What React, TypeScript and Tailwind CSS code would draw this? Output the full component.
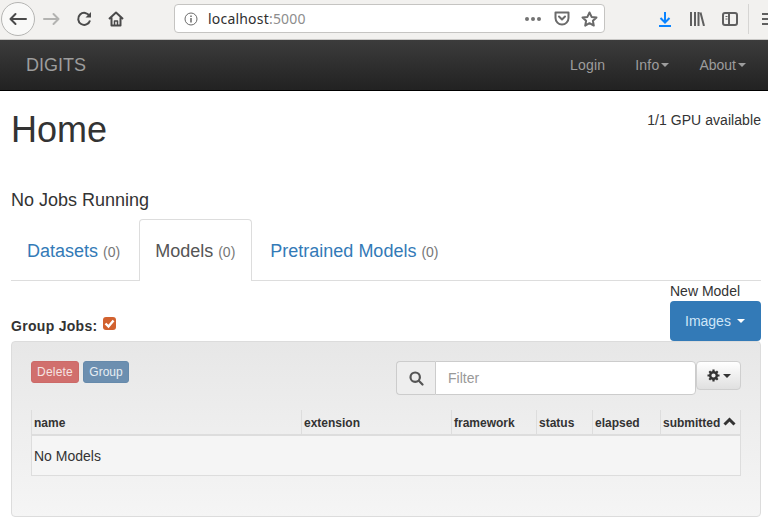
import React from 'react';

const sans = "font-['Liberation_Sans',Arial,sans-serif]";

const Caret = ({ className = '' }: { className?: string }) => (
  <span className={`inline-block w-0 h-0 border-x-4 border-x-transparent border-t-4 ${className}`} />
);

const BrowserBar: React.FC = () => (
  <div className="h-10 bg-[#f2f1ef] border-b border-[#c8c7c5] flex items-center font-['Noto_Sans',sans-serif] relative overflow-hidden">
    <div className="ml-[1px] mt-[-1px] w-[34px] h-[34px] rounded-full border border-[#b5b5b3] bg-[#f9f9f8] flex items-center justify-center shrink-0">
      <svg width="18" height="18" viewBox="0 0 18 18" fill="none" stroke="#4a4a4a" strokeWidth="2" strokeLinecap="round" strokeLinejoin="round">
        <path d="M17 9H1.500M6.500 4L1.500 9l5 5" />
      </svg>
    </div>
    <svg className="ml-[8px] mt-[-2px] shrink-0" width="17" height="16" viewBox="0 0 17 16" fill="none" stroke="#b3b3b1" strokeWidth="2" strokeLinecap="round" strokeLinejoin="round">
      <path d="M1 8h14.500M10.500 3l5 5-5 5" />
    </svg>
    <svg className="ml-[16px] mt-[-2px] shrink-0" width="16" height="16" viewBox="0 0 16 16" fill="none" stroke="#4a4a4a" strokeWidth="2">
      <path d="M13.500 5A6 6 0 1 0 14 9.500" />
      <path d="M15 1v5.500H9.500z" fill="#4a4a4a" stroke="none" />
    </svg>
    <svg className="ml-[16px] mt-[-1px] shrink-0" width="16" height="16" viewBox="0 0 16 16" fill="none" stroke="#4a4a4a" strokeWidth="2" strokeLinejoin="round">
      <path d="M1 8l7-6.500L15 8M3.500 6.500V14.500h9V6.500" />
      <path d="M6.500 14.500V10h3v4.500" strokeWidth="1.500" />
    </svg>
    <div className="ml-[50px] mt-[-2px] w-[431px] h-[29px] bg-white border border-[#c5c4c2] rounded-[4px] flex items-center shrink-0">
      <svg className="ml-[9px] shrink-0" width="14" height="14" viewBox="0 0 14 14" fill="none" stroke="#6a6a6a" strokeWidth="1">
        <circle cx="7" cy="7" r="6" />
        <path d="M7 6v4.500M7 3.500v1.500" strokeWidth="1.500" />
      </svg>
      <span className="ml-[10px] text-[14px] tracking-[0.2px] text-[#2f2f2f]">
        localhost<span className="text-[#8d8d8d]">:5000</span>
      </span>
      <div className="ml-auto flex items-center">
        <span className="flex gap-[2px]">
          <span className="w-[4px] h-[4px] rounded-full bg-[#737373]" />
          <span className="w-[4px] h-[4px] rounded-full bg-[#737373]" />
          <span className="w-[4px] h-[4px] rounded-full bg-[#737373]" />
        </span>
        <svg className="ml-[13px]" width="16" height="15" viewBox="0 0 16 15" fill="none" stroke="#6a6a6a" strokeWidth="2" strokeLinecap="round" strokeLinejoin="round">
          <path d="M1.500 1.500h13V7a6.500 6.500 0 0 1-13 0z" />
          <path d="M5 5.500l3 3 3-3" />
        </svg>
        <svg className="ml-[11px] mr-[6px]" width="17" height="16" viewBox="0 0 17 16" fill="none" stroke="#6a6a6a" strokeWidth="2" strokeLinejoin="round">
          <path d="M8.500 1.500l2.100 4.400 4.900.6-3.600 3.300.9 4.800-4.300-2.400-4.300 2.400.9-4.800L1.500 6.500l4.900-.6z" />
        </svg>
      </div>
    </div>
    <svg className="ml-[53px] mt-[-2px] shrink-0" width="14" height="16" viewBox="0 0 14 16" fill="none" stroke="#0a84ff" strokeWidth="2">
      <path d="M7 1v10M2.500 7L7 11.500 11.500 7M1 15h12" />
    </svg>
    <svg className="ml-[18px] mt-[-2px] shrink-0" width="15" height="14" viewBox="0 0 15 14" fill="none" stroke="#5f5f5f" strokeWidth="2">
      <path d="M1 0v14M5 0v14M8.500 0v14M10.500 0.500l3.500 13.500" />
    </svg>
    <svg className="ml-[17px] mt-[-2px] shrink-0" width="16" height="14" viewBox="0 0 16 14" fill="none" stroke="#5f5f5f" strokeWidth="2">
      <rect x="1" y="1" width="14" height="12" rx="2" />
      <path d="M7 1v12" />
      <path d="M3.500 4.500h2M3.500 7h2" strokeWidth="1" />
    </svg>
    <span className="ml-[10px] mt-[-2px] w-px h-[30px] bg-[#d6d5d3] shrink-0" />
    <span className="ml-[13px] mt-[-2px] w-[8px] flex flex-col gap-[3px] shrink-0">
      <span className="h-[2px] bg-[#5f5f5f]" />
      <span className="h-[2px] bg-[#5f5f5f]" />
      <span className="h-[2px] bg-[#5f5f5f]" />
    </span>
  </div>
);

const NavBar: React.FC = () => (
  <nav className="h-[51px] bg-gradient-to-b from-[#3c3c3c] to-[#222222] border-b border-black flex items-center pl-[26px] text-[#9d9d9d]">
    <span className="text-[18px]">DIGITS</span>
    <div className="ml-auto flex items-center text-[14px] pr-[22px]">
      <span className="tracking-[0.2px]">Login</span>
      <span className="ml-[30px] flex items-center tracking-[0.2px]">
        Info
        <Caret className="ml-[2px] border-t-[#9d9d9d]" />
      </span>
      <span className="ml-[30px] flex items-center">
        About
        <Caret className="ml-[2px] border-t-[#9d9d9d]" />
      </span>
    </div>
  </nav>
);

const Tab = ({ label, active, className = '' }: { label: string; active?: boolean; className?: string }) => (
  <div
    className={`h-[62px] flex items-center text-[18px] pt-[2px] ${
      active
        ? 'bg-white border border-b-0 border-[#dddddd] rounded-t-[4px] text-[#555555] mb-[-1px]'
        : 'text-[#337ab7]'
    } ${className}`}
  >
    {label}
    <span className="ml-[5px] text-[14px] text-[#777777] mt-[2px]">(0)</span>
  </div>
);

const columns = ['name', 'extension', 'framework', 'status', 'elapsed', 'submitted'];

const ModelsPanel: React.FC = () => (
  <div className="h-[176px] rounded-[4px] border border-[#dcdcdc] bg-gradient-to-b from-[#e7e7e7] to-[#f5f5f5] px-[19px] pt-[19px]">
    <div className="flex items-start justify-between h-[49px]">
      <div className="flex gap-[4px]">
        <span className="w-[48px] h-[22px] text-center rounded-[3px] bg-[#d16f6d] border border-[#cc6a68] text-[#f6e4e3] text-[12px] tracking-[0.2px] leading-[20px]">Delete</span>
        <span className="w-[46px] h-[22px] text-center rounded-[3px] bg-[#6c8fb0] border border-[#668aab] text-[#e6edf3] text-[12px] leading-[20px]">Group</span>
      </div>
      <div className="flex">
        <div className="w-[39px] h-[34px] flex items-center justify-center bg-[#eeeeee] border border-r-0 border-[#cccccc] rounded-l-[4px]">
          <svg width="15" height="15" viewBox="0 0 15 15" fill="none" stroke="#555555" strokeWidth="2.200" strokeLinecap="round">
            <circle cx="6.200" cy="6.200" r="4.700" />
            <path d="M9.800 9.800l3.700 3.700" />
          </svg>
        </div>
        <div className="w-[261px] h-[34px] bg-white border border-[#cccccc] rounded-r-[4px] pl-[12px] text-[14px] leading-[32px] text-[#999999]">Filter</div>
        <div className="w-[45px] h-[29px] rounded-[4px] border border-[#cfcfcf] bg-gradient-to-b from-white to-[#e0e0e0] flex items-center justify-center gap-[3px]">
          <svg width="13" height="13" viewBox="0 0 13 13">
            <circle cx="6.500" cy="6.500" r="3.300" fill="none" stroke="#333333" strokeWidth="2.400" />
            <path d="M6.500 0.500v2.500M6.500 10v2.500M0.500 6.500h2.500M10 6.500h2.500M2.300 2.300l1.700 1.700M9 9l1.700 1.700M2.300 10.700L4 9M9 4l1.700-1.700" stroke="#333333" strokeWidth="2.200" />
          </svg>
          <Caret className="border-t-[#333333]" />
        </div>
      </div>
    </div>
    <div className="w-[710px]">
      <div className="grid grid-cols-[270px_150px_85px_56px_68px_81px] h-[26px] border-b-2 border-[#dddddd] text-[12px] font-bold text-[#333333]">
        {columns.map((name) => (
          <div key={name} className="border-l border-[#dddddd] pl-[2px] pt-[2px] flex items-center last:border-r">
            {name}
            {name === 'submitted' && (
              <svg className="ml-[3px] mt-[-3px]" width="13" height="9" viewBox="0 0 13 9" fill="none" stroke="#333333" strokeWidth="3">
                <path d="M1.500 7.500l5-5 5 5" />
              </svg>
            )}
          </div>
        ))}
      </div>
      <div className="h-[40px] bg-[#f5f5f5] border border-t-0 border-[#dddddd] pl-[2px] text-[14px] leading-[40px] text-[#333333]">No Models</div>
    </div>
  </div>
);

const App: React.FC = () => (
  <div className={`w-[768px] h-[527px] overflow-hidden bg-white text-[#333333] ${sans}`}>
    <BrowserBar />
    <NavBar />
    <main className="pl-[11px] pr-[7px]">
      <div className="h-[82px] flex justify-between items-start pt-[19px]">
        <h1 className="text-[36px] leading-[40px]">Home</h1>
        <span className="text-[14px] tracking-[0.06px]">1/1 GPU available</span>
      </div>
      <p className="text-[18px] leading-[20px] mt-[17px]">No Jobs Running</p>
      <div className="mt-[9px] flex border-b border-[#dddddd] h-[62px]">
        <Tab label="Datasets" className="pl-[16px] pr-[19px]" />
        <Tab label="Models" active className="pl-[15px] pr-[16px]" />
        <Tab label="Pretrained Models" className="pl-[18px]" />
      </div>
      <div className="flex justify-between items-end">
        <div className="flex items-center pb-[4px]">
          <span className="text-[14px] font-bold tracking-[0.3px]">Group Jobs:</span>
          <span className="ml-[5px] mt-[-6px] w-[13px] h-[13px] rounded-[3px] bg-[#d2622f] flex items-center justify-center">
            <svg width="11" height="11" viewBox="0 0 11 11" fill="none" stroke="#ffffff" strokeWidth="2.400">
              <path d="M1.500 5.500l3 3 5-6" />
            </svg>
          </span>
        </div>
        <div className="w-[91px]">
          <div className="text-[14px] leading-[20px]">New Model</div>
          <div className="h-[40px] rounded-[4px] bg-[#337ab7] flex items-center pl-[15px] text-[14px] text-[#cfe6f7] gap-[6px]">
            Images
            <Caret className="border-t-[#ffffff]" />
          </div>
        </div>
      </div>
      <ModelsPanel />
    </main>
  </div>
);

export default App;
